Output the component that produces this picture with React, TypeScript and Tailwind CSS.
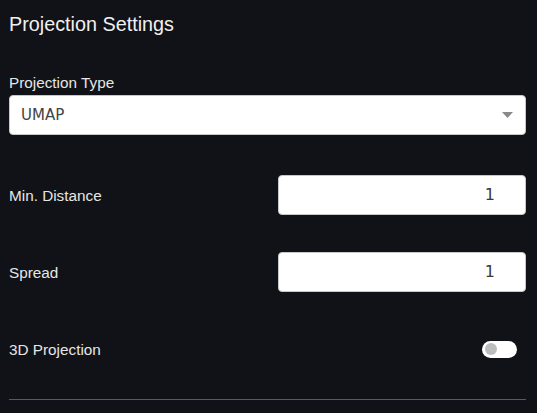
import React from "react";

const sans = { fontFamily: '"Liberation Sans", Arial, sans-serif' };

function NumberBox({ value }: { value: string }) {
  return (
    <div className="flex h-[40px] w-[248px] items-center justify-end rounded-[4px] border border-[#c8c8c8] bg-white pr-[30px] font-['DejaVu_Sans',sans-serif] text-[16px] text-[#3a3a3a]">
      {value}
    </div>
  );
}

export default function App() {
  return (
    <div className="min-h-[413px] w-[537px] bg-[#111217] pl-[9px] pr-[11px] pt-[10px] text-[#e6e6e6]" style={sans}>
      <h2 className="text-[19.8px] leading-[28px] text-[#f0f0f0]">Projection Settings</h2>

      <div className="mt-[35px] text-[15.3px] leading-[20px]">Projection Type</div>
      <div className="mt-[2px] flex h-[40px] items-center justify-between rounded-[4px] border border-[#c8c8c8] bg-white pl-[11px] pr-[12px]">
        <span className="font-['DejaVu_Sans',sans-serif] text-[15px] text-[#444]">UMAP</span>
        <svg width="11" height="6" viewBox="0 0 11 6">
          <path d="M0 0 L11 0 L5.5 6 Z" fill="#8a8a8a" />
        </svg>
      </div>

      <div className="mt-[40px] flex h-[40px] items-center justify-between">
        <span className="mt-[2px] text-[15.3px]">Min. Distance</span>
        <NumberBox value="1" />
      </div>

      <div className="mt-[37px] flex h-[40px] items-center justify-between">
        <span className="mt-[2px] text-[15.3px]">Spread</span>
        <NumberBox value="1" />
      </div>

      <div className="mt-[37px] flex h-[40px] items-center justify-between">
        <span className="mt-[2px] text-[15.3px]">3D Projection</span>
        <div className="mr-[9px] flex h-[17px] w-[35px] items-center rounded-full bg-white pl-[3px]">
          <div className="h-[12px] w-[12px] rounded-full bg-[#bdbdbd]" />
        </div>
      </div>

      <div className="mt-[30px] h-px bg-[#5a5a5e]" />
    </div>
  );
}
